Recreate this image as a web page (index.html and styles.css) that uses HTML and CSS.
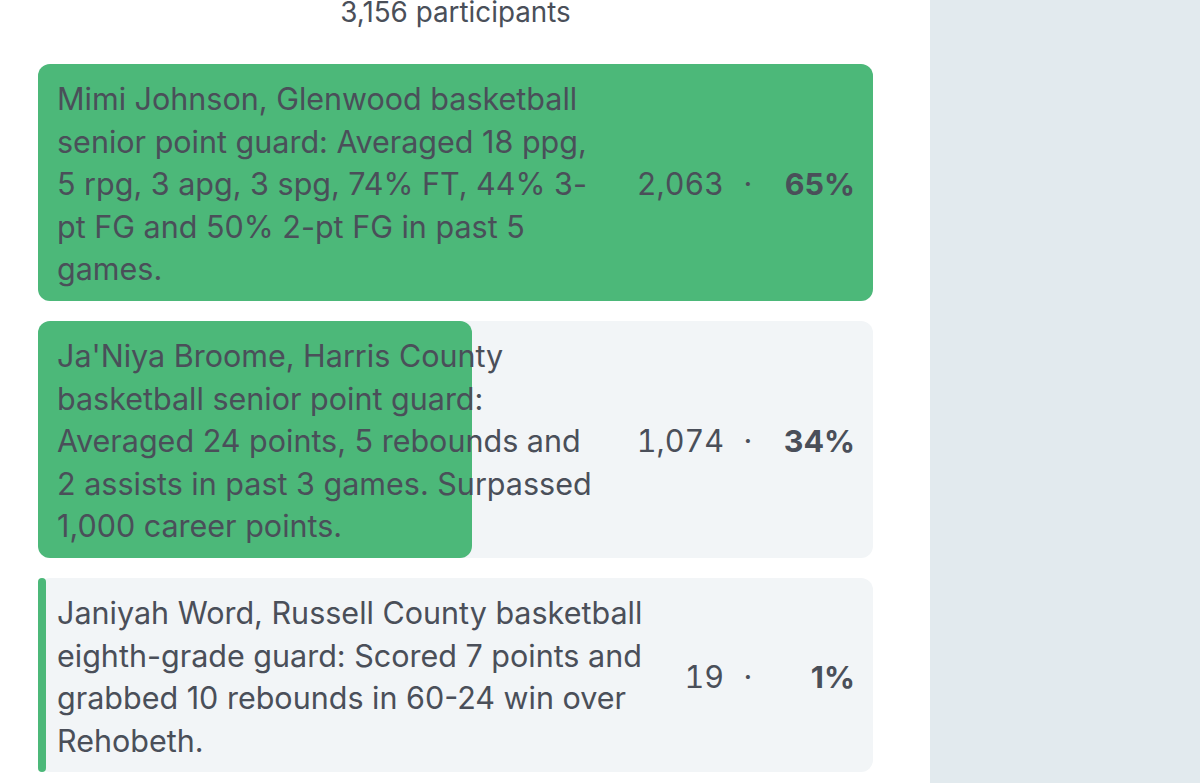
FILE: index.html
```html
<!DOCTYPE html>
<html lang="en">
<head>
<meta charset="utf-8">
<title>Poll results</title>
<link rel="stylesheet" href="styles.css">
</head>
<body>
<div class="layout">
  <main class="poll">
    <p class="poll-total">3,156 participants</p>
    <ul class="poll-options">
      <li class="option">
        <span class="option-bar" style="width: 100%"></span>
        <span class="option-text">Mimi Johnson, Glenwood basketball senior point guard: Averaged 18 ppg, 5 rpg, 3 apg, 3 spg, 74% FT, 44% 3-pt FG and 50% 2-pt FG in past 5 games.</span>
        <span class="option-count">2,063</span>
        <span class="option-sep">·</span>
        <span class="option-pct">65%</span>
      </li>
      <li class="option">
        <span class="option-bar" style="width: 52%"></span>
        <span class="option-text">Ja'Niya Broome, Harris County basketball senior point guard: Averaged 24 points, 5 rebounds and 2 assists in past 3 games. Surpassed 1,000 career points.</span>
        <span class="option-count">1,074</span>
        <span class="option-sep">·</span>
        <span class="option-pct">34%</span>
      </li>
      <li class="option">
        <span class="option-bar" style="width: 8px"></span>
        <span class="option-text">Janiyah Word, Russell County basketball eighth-grade guard: Scored 7 points and grabbed 10 rebounds in 60-24 win over Rehobeth.</span>
        <span class="option-count">19</span>
        <span class="option-sep">·</span>
        <span class="option-pct">1%</span>
      </li>
    </ul>
  </main>
  <aside class="sidebar"></aside>
</div>
</body>
</html>
```
FILE: styles.css
```css
html, body {
  margin: 0;
  padding: 0;
  height: 100%;
  overflow: hidden;
  background: #ffffff;
}

body {
  font-family: Inter, "Noto Sans", sans-serif;
  color: #4a4f59;
}

.layout {
  display: flex;
  height: 783px;
}

.poll {
  width: 930px;
  flex: none;
  padding: 0 57px 0 38px;
  box-sizing: border-box;
}

.sidebar {
  flex: 1;
  background: #e2eaee;
}

.poll-total {
  margin: -7px 0 0;
  width: 835px;
  text-align: center;
  font-size: 27.8px;
  line-height: 38px;
  color: #4a4f59;
}

.poll-options {
  list-style: none;
  margin: 33px 0 0;
  padding: 0;
  width: 835px;
  display: flex;
  flex-direction: column;
  gap: 20.5px;
}

.option {
  position: relative;
  display: flex;
  align-items: center;
  padding: 14px 18px 10px 19px;
  background: #f2f5f7;
  border-radius: 12px;
  font-size: 30.5px;
  line-height: 42.5px;
}

.option-bar {
  position: absolute;
  top: 0;
  left: 0;
  bottom: 0;
  background: #4cb879;
  border-radius: 12px;
}

.option:last-child .option-bar {
  border-radius: 5px;
}

.option-text,
.option-count,
.option-sep,
.option-pct {
  position: relative;
}

.option-text {
  flex: 1;
  min-width: 0;
  margin-right: 40px;
}

.option-count {
  flex: none;
  font-variant-numeric: tabular-nums;
}

.option-sep {
  flex: none;
  width: 48px;
  text-align: center;
}

.option-pct {
  flex: none;
  width: 83px;
  text-align: right;
  font-weight: 700;
}
```
